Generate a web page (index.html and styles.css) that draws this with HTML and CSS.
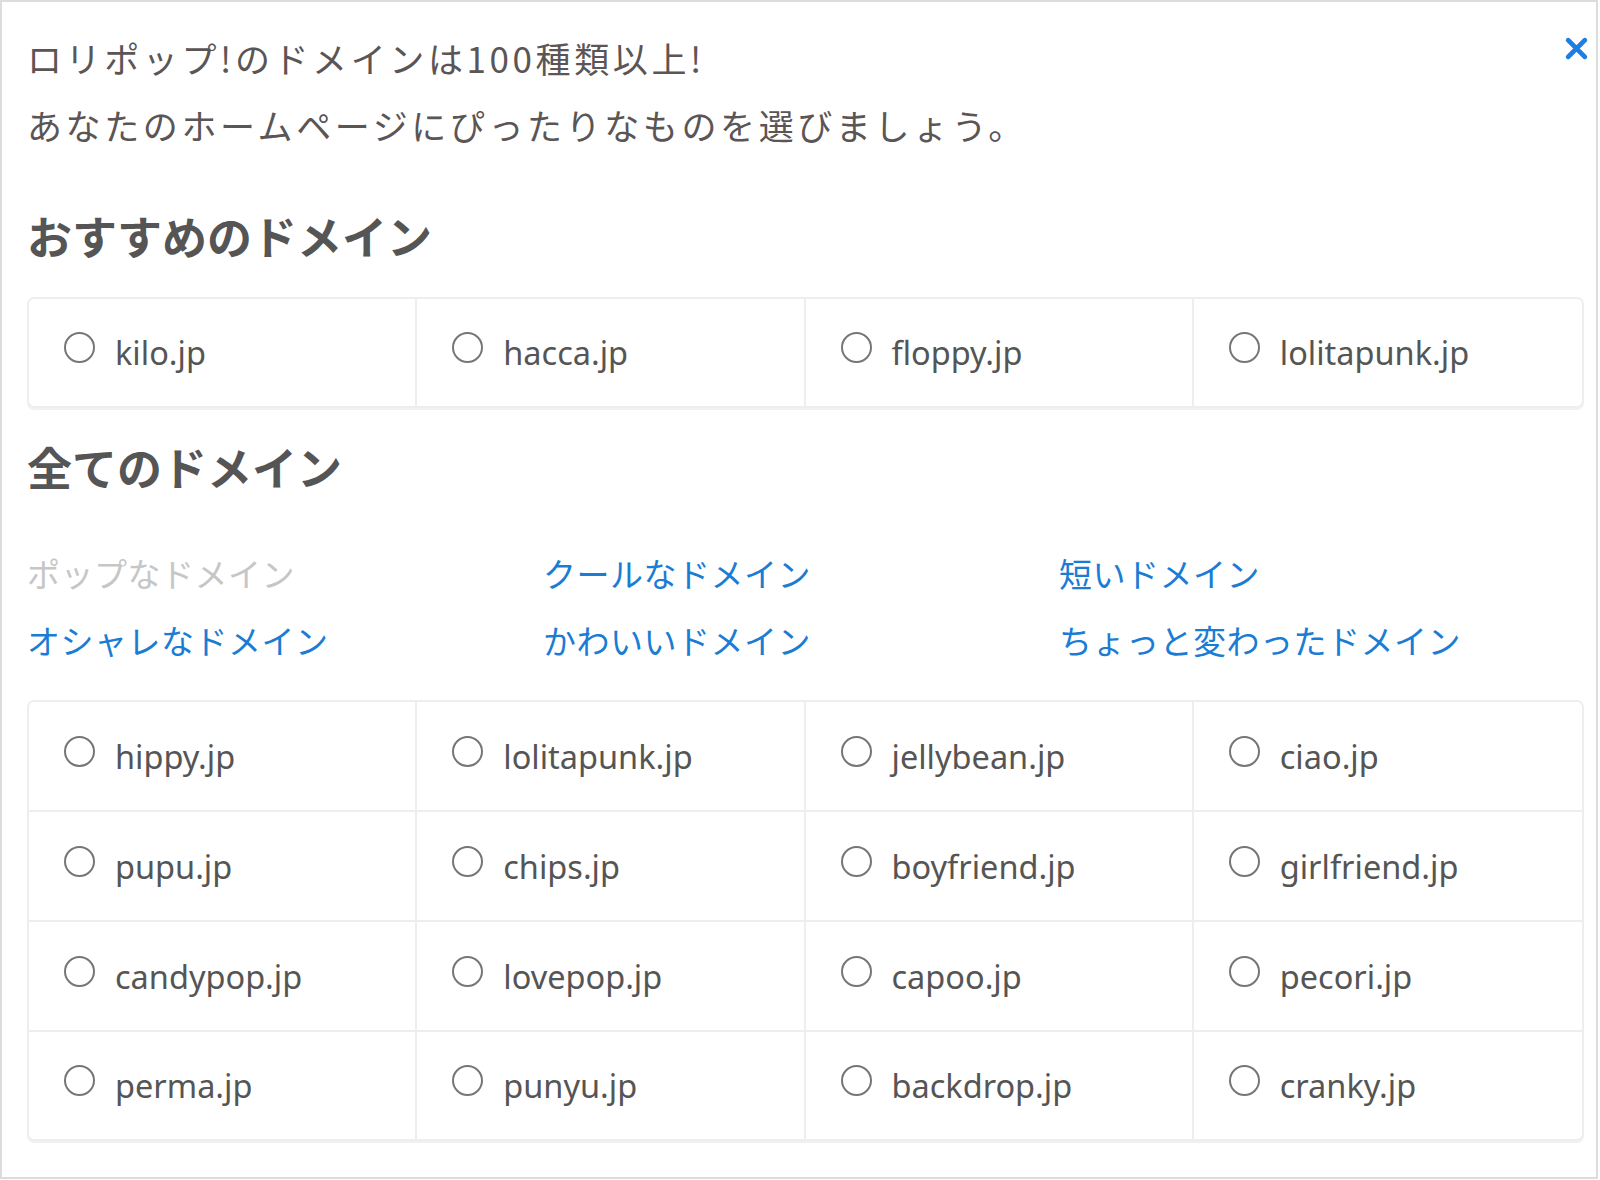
FILE: index.html
```html
<!DOCTYPE html>
<html lang="ja">
<head>
    <meta charset="UTF-8">
    <title>ドメインを選ぶ</title>
    <link rel="stylesheet" href="styles.css">
</head>
<body>
    <div class="modal">
        <button class="close-btn" type="button" aria-label="閉じる">
            <svg viewBox="0 0 24 24" width="25" height="25"><path d="M4 4L20 20M20 4L4 20" stroke="#1b7fe3" stroke-width="4.6" stroke-linecap="round" fill="none"/></svg>
        </button>

        <p class="intro">ロリポップ!のドメインは100種類以上!<br>あなたのホームページにぴったりなものを選びましょう。</p>

        <h2 class="section-title">おすすめのドメイン</h2>
        <div class="domain-grid pick-grid">
            <label class="domain-cell"><input type="radio" name="domain"><span>kilo.jp</span></label>
            <label class="domain-cell"><input type="radio" name="domain"><span>hacca.jp</span></label>
            <label class="domain-cell"><input type="radio" name="domain"><span>floppy.jp</span></label>
            <label class="domain-cell"><input type="radio" name="domain"><span>lolitapunk.jp</span></label>
        </div>

        <h2 class="section-title all-title">全てのドメイン</h2>
        <ul class="category-list">
            <li class="current">ポップなドメイン</li>
            <li><a href="#">クールなドメイン</a></li>
            <li><a href="#">短いドメイン</a></li>
            <li><a href="#">オシャレなドメイン</a></li>
            <li><a href="#">かわいいドメイン</a></li>
            <li><a href="#">ちょっと変わったドメイン</a></li>
        </ul>

        <div class="domain-grid all-grid">
            <label class="domain-cell"><input type="radio" name="domain"><span>hippy.jp</span></label>
            <label class="domain-cell"><input type="radio" name="domain"><span>lolitapunk.jp</span></label>
            <label class="domain-cell"><input type="radio" name="domain"><span>jellybean.jp</span></label>
            <label class="domain-cell"><input type="radio" name="domain"><span>ciao.jp</span></label>
            <label class="domain-cell"><input type="radio" name="domain"><span>pupu.jp</span></label>
            <label class="domain-cell"><input type="radio" name="domain"><span>chips.jp</span></label>
            <label class="domain-cell"><input type="radio" name="domain"><span>boyfriend.jp</span></label>
            <label class="domain-cell"><input type="radio" name="domain"><span>girlfriend.jp</span></label>
            <label class="domain-cell"><input type="radio" name="domain"><span>candypop.jp</span></label>
            <label class="domain-cell"><input type="radio" name="domain"><span>lovepop.jp</span></label>
            <label class="domain-cell"><input type="radio" name="domain"><span>capoo.jp</span></label>
            <label class="domain-cell"><input type="radio" name="domain"><span>pecori.jp</span></label>
            <label class="domain-cell"><input type="radio" name="domain"><span>perma.jp</span></label>
            <label class="domain-cell"><input type="radio" name="domain"><span>punyu.jp</span></label>
            <label class="domain-cell"><input type="radio" name="domain"><span>backdrop.jp</span></label>
            <label class="domain-cell"><input type="radio" name="domain"><span>cranky.jp</span></label>
        </div>
    </div>
</body>
</html>
```

FILE: styles.css
```css
/* domain picker modal */
html, body { margin: 0; padding: 0; background: #fff; }
body { font-family: "Noto Sans CJK JP", "Noto Sans", sans-serif; color: #5a5555; }

.modal { position: relative; box-sizing: border-box; width: 1598px; height: 1179px; border: 2px solid #dcdcdc; padding: 22px 12px 0 25px; }

.close-btn { position: absolute; top: 34px; right: 7px; width: 25px; height: 25px; padding: 0; border: 0; background: none; cursor: pointer; }
.close-btn svg { display: block; }

.intro { margin: 0; font-size: 35px; line-height: 67px; letter-spacing: 3.6px; color: #5b5555; }

.section-title { margin: 47px 0 30px; font-size: 45px; line-height: 62px; font-weight: 700; letter-spacing: 0; color: #555; }
.section-title.all-title { margin: 28px 0 42px; }

.category-list { list-style: none; margin: 0 0 26px; padding: 0; display: grid; grid-template-columns: 516px 516px 1fr; font-size: 33px; line-height: 67px; letter-spacing: 0.5px; }
.category-list li { margin: 0; }
.category-list li.current { color: #c6c6c6; }
.category-list a { color: #1b7cd4; text-decoration: none; }

.domain-grid { display: grid; grid-template-columns: repeat(4, 1fr); border: 2px solid #eee; border-radius: 7px; box-shadow: 0 2px 0 #f1f1f1; overflow: hidden; }
.domain-cell { display: flex; align-items: center; height: 108px; padding-left: 35px; border-right: 2px solid #eee; border-bottom: 2px solid #eee; font-family: "Noto Sans", sans-serif; font-size: 32.5px; color: #555; cursor: pointer; }
.domain-cell:nth-child(4n) { border-right: 0; }
.pick-grid .domain-cell { border-bottom: 0; height: 107px; }
.all-grid .domain-cell:nth-last-child(-n+4) { border-bottom: 0; height: 107px; }

.domain-cell input { appearance: none; -webkit-appearance: none; box-sizing: border-box; width: 31px; height: 31px; margin: 0 20px 10px 0; border: 2px solid #767676; border-radius: 50%; background: #fff; flex-shrink: 0; }
```
